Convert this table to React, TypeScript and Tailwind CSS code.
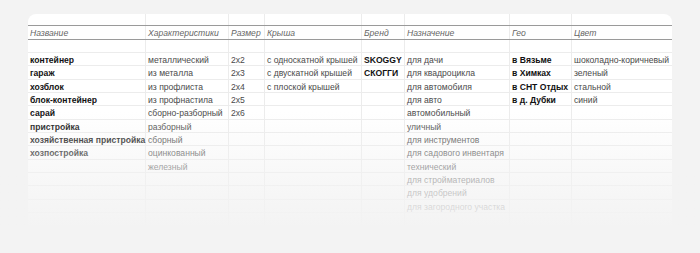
const cols = ["w-[118px]", "w-[83px]", "w-[36px]", "w-[97px]", "w-[43px]", "w-[105px]", "w-[62px]", "w-[100px]"];

const header = ["Название", "Характеристики", "Размер", "Крыша", "Бренд", "Назначение", "Гео", "Цвет"];

// bold columns: name, brand, geo
const boldCols = [0, 4, 6];

const rows: string[][] = [
    ["контейнер", "металлический", "2x2", "с односкатной крышей", "SKOGGY", "для дачи", "в Вязьме", "шоколадно-коричневый"],
    ["гараж", "из металла", "2x3", "с двускатной крышей", "СКОГГИ", "для квадроцикла", "в Химках", "зеленый"],
    ["хозблок", "из профлиста", "2x4", "с плоской крышей", "", "для автомобиля", "в СНТ Отдых", "стальной"],
    ["блок-контейнер", "из профнастила", "2x5", "", "", "для авто", "в д. Дубки", "синий"],
    ["сарай", "сборно-разборный", "2x6", "", "", "автомобильный", "", ""],
    ["пристройка", "разборный", "", "", "", "уличный", "", ""],
    ["хозяйственная пристройка", "сборный", "", "", "", "для инструментов", "", ""],
    ["хозпостройка", "оцинкованный", "", "", "", "для садового инвентаря", "", ""],
    ["", "железный", "", "", "", "технический", "", ""],
    ["", "", "", "", "", "для стройматериалов", "", ""],
    ["", "", "", "", "", "для удобрений", "", ""],
    ["", "", "", "", "", "для загородного участка", "", ""],
    ["", "", "", "", "", "", "", ""],
];

function Cell({ i, text, bold }: { i: number; text: string; bold?: boolean }) {
    return (
        <div className={`${cols[i]} shrink-0 h-full flex items-start pl-[2px] pt-[3px] overflow-visible whitespace-nowrap ${i < 7 ? "border-r border-[#ececec]" : ""}`}>
            <span className={bold ? "font-bold text-[#111]" : "text-[#4a4a4a]"}>{text}</span>
        </div>
    );
}

export default function App() {
    return (
        <div className="w-[700px] h-[253px] bg-[#f3f3f3] overflow-hidden relative" style={{ fontFamily: '"Liberation Sans", Arial, sans-serif' }}>
            <div className="ml-[28px] mt-[14px] w-[644px] bg-white rounded-t-[8px] text-[8.6px] leading-none">

                {/* top spacer row */}
                <div className="flex h-[12px] border-b border-[#9a9a9a]">
                    {cols.map((_, i) => (
                        <div key={i} className={`${cols[i]} shrink-0 h-full ${i < 7 ? "border-r border-[#ececec]" : ""}`} />
                    ))}
                </div>

                {/* header */}
                <div className="flex h-[14px] border-b border-[#9a9a9a] italic text-[#666]">
                    {header.map((h, i) => (
                        <div key={i} className={`${cols[i]} shrink-0 h-full flex items-center pl-[2px] pt-[2px] ${i < 7 ? "border-r border-[#ececec]" : ""}`}>
                            {h}
                        </div>
                    ))}
                </div>

                {/* empty row */}
                <div className="flex h-[13px] border-b border-[#ececec]">
                    {cols.map((_, i) => (
                        <div key={i} className={`${cols[i]} shrink-0 h-full ${i < 7 ? "border-r border-[#ececec]" : ""}`} />
                    ))}
                </div>

                {rows.map((r, ri) => (
                    <div key={ri} className="flex h-[13.33px] border-b border-[#ececec]">
                        {r.map((t, i) => (
                            <Cell key={i} i={i} text={t} bold={boldCols.includes(i)} />
                        ))}
                    </div>
                ))}
            </div>

            {/* fade out */}
            <div className="absolute left-0 right-0 top-[112px] h-[116px] bg-gradient-to-b from-[#f3f3f3]/0 via-[#f3f3f3]/55 to-[#f3f3f3]" />
            <div className="absolute left-0 right-0 top-[227px] bottom-0 bg-[#f3f3f3]" />
        </div>
    );
}
